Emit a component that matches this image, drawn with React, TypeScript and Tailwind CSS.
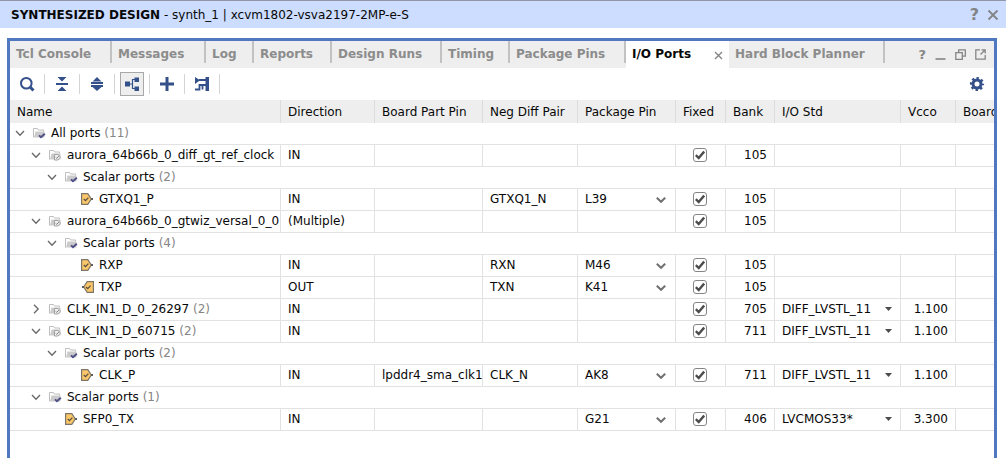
import { useState } from "react";

type FolderKind = "group" | "interface";

interface PortRow {
  name: string;
  level: number;
  count?: number;
  folder?: FolderKind;
  collapsed?: boolean;
  spanning?: boolean;
  direction?: string;
  boardPin?: string;
  negPair?: string;
  packagePin?: string;
  bank?: string;
  ioStd?: string;
  vcco?: string;
}

const rows: PortRow[] = [
  { name: "All ports", level: 0, count: 11, folder: "group", spanning: true },
  { name: "aurora_64b66b_0_diff_gt_ref_clock", level: 1, folder: "interface", direction: "IN", bank: "105" },
  { name: "Scalar ports", level: 2, count: 2, folder: "group", spanning: true },
  { name: "GTXQ1_P", level: 3, direction: "IN", negPair: "GTXQ1_N", packagePin: "L39", bank: "105" },
  { name: "aurora_64b66b_0_gtwiz_versal_0_0", level: 1, folder: "interface", direction: "(Multiple)", bank: "105" },
  { name: "Scalar ports", level: 2, count: 4, folder: "group", spanning: true },
  { name: "RXP", level: 3, direction: "IN", negPair: "RXN", packagePin: "M46", bank: "105" },
  { name: "TXP", level: 3, direction: "OUT", negPair: "TXN", packagePin: "K41", bank: "105" },
  { name: "CLK_IN1_D_0_26297", level: 1, count: 2, folder: "interface", collapsed: true, direction: "IN", bank: "705", ioStd: "DIFF_LVSTL_11", vcco: "1.100" },
  { name: "CLK_IN1_D_60715", level: 1, count: 2, folder: "interface", direction: "IN", bank: "711", ioStd: "DIFF_LVSTL_11", vcco: "1.100" },
  { name: "Scalar ports", level: 2, count: 2, folder: "group", spanning: true },
  { name: "CLK_P", level: 3, direction: "IN", boardPin: "lpddr4_sma_clk1", negPair: "CLK_N", packagePin: "AK8", bank: "711", ioStd: "DIFF_LVSTL_11", vcco: "1.100" },
  { name: "Scalar ports", level: 1, count: 1, folder: "group", spanning: true },
  { name: "SFP0_TX", level: 2, direction: "IN", packagePin: "G21", bank: "406", ioStd: "LVCMOS33*", vcco: "3.300" },
];

const tabs = [
  { label: "Tcl Console", width: "w-[102px]" },
  { label: "Messages", width: "w-[94px]" },
  { label: "Log", width: "w-[48px]" },
  { label: "Reports", width: "w-[78px]" },
  { label: "Design Runs", width: "w-[110px]" },
  { label: "Timing", width: "w-[68px]" },
  { label: "Package Pins", width: "w-[116px]" },
  { label: "I/O Ports", width: "w-[103px]" },
  { label: "Hard Block Planner", width: "w-[156px]" },
];

const columns = [
  { label: "Name", width: "w-[271px]" },
  { label: "Direction", width: "w-[94px]" },
  { label: "Board Part Pin", width: "w-[108px]" },
  { label: "Neg Diff Pair", width: "w-[95px]" },
  { label: "Package Pin", width: "w-[98px]" },
  { label: "Fixed", width: "w-[50px]" },
  { label: "Bank", width: "w-[49px]" },
  { label: "I/O Std", width: "w-[126px]" },
  { label: "Vcco", width: "w-[55px]" },
  { label: "Board", width: "" },
];

const indents = ["pl-[5px]", "pl-[21px]", "pl-[37px]", "pl-[53px]"];

const Chevron = ({ collapsed }: { collapsed?: boolean }) => (
  <svg width="10" height="10" viewBox="0 0 10 10" fill="none" stroke="#666" strokeWidth="1.3">
    {collapsed ? <path d="M3 0.8 7.2 5 3 9.2" /> : <path d="M1 3 5 7.2 9 3" />}
  </svg>
);

const FolderIcon = ({ kind }: { kind: FolderKind }) => (
  <svg width="13" height="12" viewBox="0 0 13 12" fill="none">
    <path d="M0.5 10.5V1.5H4.5L5.5 3H10.5V4.5" stroke="#bdbdbd" />
    <path d="M1 10.5 2.5 4.5H11.5V10.5Z" fill="#cbcbcb" />
    {kind === "group" ? (
      <path d="M6 8.4 8 10.3 11.8 6.7" stroke="#4f4f88" strokeWidth="1.9" />
    ) : (
      <>
        <path d="M5.5 5.5H9L11.5 8 9 11H5.5Z" fill="#f4f4f4" stroke="#a0a0a0" />
        <path d="M6.6 8.3 7.8 9.4 9.8 7" stroke="#808080" />
      </>
    )}
  </svg>
);

const PortIcon = ({ output }: { output: boolean }) => (
  <svg width="13" height="12" viewBox="0 0 13 12" fill="none">
    <g transform={output ? "matrix(-1 0 0 1 13 0)" : undefined}>
      <path d="M0.6 0.6H6.8L10.3 6 6.8 11.4H0.6Z" fill="#fcc768" stroke="#7c766a" strokeWidth="1.2" />
      <path d="M10 6H12" stroke="#5c5c5c" strokeWidth="2" />
    </g>
    <path d={output ? "M5 6 6.7 7.6 9.6 4.6" : "M2.8 6 4.5 7.6 7.4 4.6"} stroke="#555045" strokeWidth="1.3" />
  </svg>
);

const CheckBox = ({ label }: { label: string }) => (
  <span className="grid h-[21px] place-items-center pr-px pb-px">
    <input
      type="checkbox"
      defaultChecked
      aria-label={label}
      className="peer size-3.5 appearance-none rounded-[3px] border border-[#858585] bg-white [grid-area:1/1]"
    />
    <svg
      width="10"
      height="10"
      viewBox="0 0 10 10"
      fill="none"
      stroke="#4c4c4c"
      strokeWidth="2.4"
      className="pointer-events-none invisible [grid-area:1/1] peer-checked:visible"
    >
      <path d="M0.8 5.2 3.7 8 9.2 1.6" />
    </svg>
  </span>
);

const PinSelect = ({ value, label }: { value: string; label: string }) => (
  <span className="grid h-[21px] items-center pb-px">
    <select aria-label={label} className="w-full appearance-none bg-transparent pr-6 outline-none [grid-area:1/1]">
      <option>{value}</option>
    </select>
    <svg
      width="10"
      height="8"
      viewBox="0 0 10 8"
      fill="none"
      stroke="#707070"
      strokeWidth="2"
      className="pointer-events-none mt-0.5 mr-[9px] justify-self-end [grid-area:1/1]"
    >
      <path d="M0.8 1.8 5 5.8 9.2 1.8" />
    </svg>
  </span>
);

const StdSelect = ({ value, label }: { value: string; label: string }) => (
  <span className="grid h-[21px] items-center pb-px">
    <select aria-label={label} className="w-full appearance-none bg-transparent pr-6 outline-none [grid-area:1/1]">
      <option>{value}</option>
    </select>
    <svg
      width="7"
      height="4"
      viewBox="0 0 7 4"
      fill="#4c4c4c"
      className="pointer-events-none mr-2 justify-self-end [grid-area:1/1]"
    >
      <path d="M0 0H7L3.5 4Z" />
    </svg>
  </span>
);

const NameCell = ({ row }: { row: PortRow }) => (
  <div className={`flex h-[21px] items-center overflow-hidden pb-px whitespace-nowrap ${indents[row.level]}`}>
    {row.folder ? (
      <button aria-label={`Toggle ${row.name}`} className="w-[18px] shrink-0">
        <Chevron collapsed={row.collapsed} />
      </button>
    ) : (
      <span className="w-[18px] shrink-0" />
    )}
    <span className="w-[18px] shrink-0">
      {row.folder ? <FolderIcon kind={row.folder} /> : <PortIcon output={row.direction === "OUT"} />}
    </span>
    <span>
      {row.name}
      {row.count && <span className="text-[#858585]"> ({row.count})</span>}
    </span>
  </div>
);

const tools = [
  {
    label: "Search",
    icon: (
      <g fill="none" stroke="#34508a">
        <circle cx="7.3" cy="7.3" r="5.3" strokeWidth="2" />
        <path d="M11.3 11.3 14.5 14.5" strokeWidth="3" />
      </g>
    ),
  },
  {
    label: "Collapse all",
    icon: <path d="M3.5 1H12.5L8 5.6ZM2 7H14V9H2ZM3.5 15H12.5L8 10.4Z" fill="#34508a" />,
  },
  {
    label: "Expand all",
    icon: <path d="M8 1 12.5 5.5H3.5ZM2 6H14V8H2ZM2 9H14V11H2ZM3.5 11H12.5L8 15Z" fill="#34508a" />,
  },
  {
    label: "Group by interface",
    icon: (
      <>
        <path d="M1 5.5H6V10.5H1ZM10.5 1.5H15V6H10.5ZM10.5 10.5H15V15H10.5Z" fill="#34508a" />
        <path d="M6 8H8.5M11 3.5H8.5V12.5H11" fill="none" stroke="#34508a" strokeWidth="1.2" />
      </>
    ),
  },
  {
    label: "Create port",
    icon: <path d="M1 8H15M8 1V15" stroke="#34508a" strokeWidth="3" />,
  },
  {
    label: "Schematic",
    icon: (
      <>
        <path d="M1 1 6 4.2 1 8ZM11.5 1H15V15H11.5Z" fill="#34508a" />
        <path d="M5 4H12M1 13.5H5.5V9H12M8.5 9V13.5" fill="none" stroke="#34508a" strokeWidth="1.8" />
      </>
    ),
  },
];

const App = () => {
  const [active, setActive] = useState("I/O Ports");

  return (
    <div className="flex h-screen flex-col overflow-hidden bg-white font-['DejaVu_Sans',sans-serif] text-[12px] leading-[16px] text-[#080808]">
      <header className="flex h-7 shrink-0 items-center justify-between border-t border-[#9096a8] bg-[#ccddff] pr-[7px] pl-[11px]">
        <h1>
          <b>SYNTHESIZED DESIGN</b> - synth_1 | xcvm1802-vsva2197-2MP-e-S
        </h1>
        <div className="flex items-center gap-2 text-[#848484]">
          <button aria-label="Help" className="text-[16px] font-bold">
            ?
          </button>
          <button aria-label="Close">
            <svg width="12" height="12" viewBox="0 0 12 12" stroke="#848484" strokeWidth="1.8">
              <path d="M1.5 1.5 10.5 10.5M10.5 1.5 1.5 10.5" />
            </svg>
          </button>
        </div>
      </header>

      <main className="mt-2.5 mr-[9px] ml-[7px] flex min-h-0 flex-1 flex-col border-x-3 border-t-3 border-[#4f78c0]">
        <div className="flex h-[27px] shrink-0 justify-between bg-[#eeeeee]">
          <div role="tablist" className="flex font-bold text-[#8c8c8c]">
            {tabs.map(({ label, width }) => (
              <div
                key={label}
                className={`flex shrink-0 justify-between ${width} ${label === active ? "bg-white text-[#080808]" : ""}`}
              >
                <button
                  role="tab"
                  aria-selected={label === active}
                  onClick={() => setActive(label)}
                  className="flex-1 pb-0.5 pl-1.5 text-left whitespace-nowrap"
                >
                  {label}
                </button>
                {label === active ? (
                  <button aria-label={`Close ${label}`} className="pt-0.5 pr-1.5 pl-2">
                    <svg width="9" height="9" viewBox="0 0 9 9" stroke="#858585" strokeWidth="1.4">
                      <path d="M1 1 8 8M8 1 1 8" />
                    </svg>
                  </button>
                ) : (
                  <span className="h-[22px] w-0.5 bg-[#c2c2c2]" />
                )}
              </div>
            ))}
          </div>
          <div className="flex items-center gap-[9px] pr-2 text-[#858585]">
            <button aria-label="Help" className="text-[13px] font-bold">
              ?
            </button>
            <button aria-label="Minimize">
              <svg width="11" height="11" viewBox="0 0 11 11" stroke="#858585" strokeWidth="1.6">
                <path d="M0.5 10H10.5" />
              </svg>
            </button>
            <button aria-label="Restore">
              <svg width="11" height="11" viewBox="0 0 11 11" fill="none" stroke="#858585" strokeWidth="1.3">
                <path d="M3.7 3.5V0.8H10.3V7.2H7.5M0.8 3.7H7.3V10.3H0.8Z" />
              </svg>
            </button>
            <button aria-label="Float">
              <svg width="11" height="11" viewBox="0 0 11 11" fill="none" stroke="#858585" strokeWidth="1.3">
                <path d="M5 0.9H0.8V10.2H10.2V6M5.5 5.5 9.5 1.5M6.5 0.9H10.2V4.5" />
              </svg>
            </button>
          </div>
        </div>

        <div className="flex h-8 shrink-0 items-center justify-between pr-[9px]">
          <div className="flex items-center">
            {tools.map((tool) => (
              <div key={tool.label} className="flex h-5 items-center border-r border-[#d4d4d4] px-[5px]">
                <button
                  aria-label={tool.label}
                  className={
                    tool.label === "Group by interface"
                      ? "flex size-6 items-center justify-center border border-[#a8a8a8] bg-[#eeeeee]"
                      : "flex h-5 w-6 items-center justify-center"
                  }
                >
                  <svg width="16" height="16" viewBox="0 0 16 16">
                    {tool.icon}
                  </svg>
                </button>
              </div>
            ))}
          </div>
          <button aria-label="Settings">
            <svg width="16" height="16" viewBox="0 0 16 16" fill="none" stroke="#34508a">
              <circle cx="8" cy="8" r="4" strokeWidth="3" />
              <circle cx="8" cy="8" r="6" strokeWidth="2.2" strokeDasharray="2.4 2.312" strokeDashoffset="1.2" />
            </svg>
          </button>
        </div>

        <div className="min-h-0 flex-1 overflow-hidden">
          <table className="w-full table-fixed border-separate border-spacing-0">
            <thead>
              <tr className="h-[23px] bg-[#eeeeee] text-left">
                {columns.map((col) => (
                  <th
                    key={col.label}
                    className={`overflow-hidden border-r border-[#dcdcdc] p-0 pl-[7px] font-normal whitespace-nowrap last:border-r-0 ${col.width}`}
                  >
                    {col.label}
                  </th>
                ))}
              </tr>
            </thead>
            <tbody className="[&_td]:h-[22px] [&_td]:overflow-hidden [&_td]:border-b [&_td]:border-[#e2e2e2] [&_td]:p-0 [&_td]:whitespace-nowrap">
              {rows.map((row, i) =>
                row.spanning ? (
                  <tr key={i}>
                    <td colSpan={10}>
                      <NameCell row={row} />
                    </td>
                  </tr>
                ) : (
                  <tr key={i} className="[&>td:not(:last-child)]:border-r">
                    <td>
                      <NameCell row={row} />
                    </td>
                    <td>
                      <div className="pb-px pl-[7px]">{row.direction}</div>
                    </td>
                    <td>
                      <div className="pb-px pl-[7px]">{row.boardPin}</div>
                    </td>
                    <td>
                      <div className="pb-px pl-[7px]">{row.negPair}</div>
                    </td>
                    <td>
                      <div className="pl-[7px]">
                        {row.packagePin && <PinSelect value={row.packagePin} label={`${row.name} package pin`} />}
                      </div>
                    </td>
                    <td>
                      <CheckBox label={`${row.name} fixed`} />
                    </td>
                    <td>
                      <div className="pr-[7px] pb-px text-right">{row.bank}</div>
                    </td>
                    <td>
                      <div className="pl-[7px]">
                        {row.ioStd && <StdSelect value={row.ioStd} label={`${row.name} I/O standard`} />}
                      </div>
                    </td>
                    <td>
                      <div className="pr-[7px] pb-px text-right">{row.vcco}</div>
                    </td>
                    <td />
                  </tr>
                )
              )}
            </tbody>
          </table>
        </div>
      </main>
    </div>
  );
};

export default App;
